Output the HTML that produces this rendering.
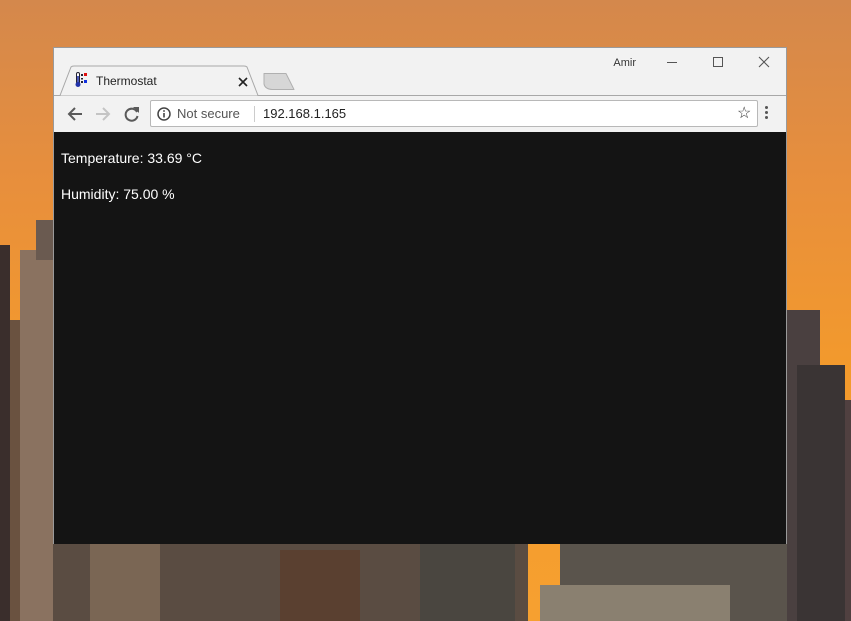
<!DOCTYPE html>
<html><head><meta charset="utf-8"><style>
*{margin:0;padding:0;box-sizing:border-box}
body{width:851px;height:621px;overflow:hidden;position:relative;font-family:"Liberation Sans",Arial,sans-serif;
background:linear-gradient(180deg,#d4884c 0%,#e88f3c 30%,#f39a2c 60%,#f6a030 100%)}
.b{position:absolute;background:#5a4a42}
.win{position:absolute;left:53px;top:47px;width:734px;height:497px;background:#f2f2f2;border:1px solid #9a9a9a}
.content{position:absolute;left:0;top:84px;width:732px;height:412px;background:#141414;color:#fff;font-size:14px}
.omni{position:absolute;left:96px;top:52px;width:608px;height:27px;background:#fff;border:1px solid #b8b8b8;border-radius:2px}
</style></head><body>
<div class="b" style="left:0;top:245px;width:10px;height:376px;background:#3a2e2c"></div>
<div class="b" style="left:10px;top:320px;width:12px;height:301px;background:#6a5240"></div>
<div class="b" style="left:20px;top:250px;width:33px;height:371px;background:#8a7260"></div>
<div class="b" style="left:36px;top:220px;width:17px;height:40px;background:#6a5a50"></div>
<div class="b" style="left:787px;top:310px;width:33px;height:311px;background:#4a4040"></div>
<div class="b" style="left:797px;top:365px;width:48px;height:256px;background:#3a3434"></div>
<div class="b" style="left:845px;top:400px;width:6px;height:221px;background:#504040"></div>
<div class="b" style="left:53px;top:544px;width:475px;height:77px;background:#5a4c42"></div>
<div class="b" style="left:90px;top:544px;width:70px;height:77px;background:#7a6654"></div>
<div class="b" style="left:280px;top:550px;width:80px;height:71px;background:#5a4030"></div>
<div class="b" style="left:420px;top:544px;width:95px;height:77px;background:#4a4640"></div>
<div class="b" style="left:560px;top:544px;width:227px;height:77px;background:#5a544c"></div>
<div class="b" style="left:540px;top:585px;width:190px;height:36px;background:#8a8070"></div>
<div class="win">
  <div style="position:absolute;right:150px;top:9px;font-size:11px;color:#333;text-shadow:0 0 2px #fff">Amir</div>
  <div style="position:absolute;left:613px;top:14px;width:10px;height:1px;background:#555"></div>
  <div style="position:absolute;left:659px;top:9px;width:10px;height:10px;border:1px solid #555"></div>
  <svg style="position:absolute;left:704px;top:8px" width="12" height="12"><path d="M1 1 L11 11 M11 1 L1 11" stroke="#555" stroke-width="1.1"/></svg>
  <div style="position:absolute;left:0;top:47px;width:732px;height:1px;background:#a8a8a8"></div>
  <svg style="position:absolute;left:0;top:16px" width="260" height="33">
    <path d="M0 31.5 L6 31.5 L17 3 Q18 2 20 2 L190 2 Q192 2 193 3 L204 31.5" fill="#f2f2f2" stroke="#a8a8a8"/>
    <path d="M210 9.5 L232 9.5 L240 25.5 L218 25.5 Q211 25 210 20 Z" fill="#d6d6d6" stroke="#b0b0b0" stroke-linejoin="round"/>
  </svg>
  <svg style="position:absolute;left:21px;top:24px" width="14" height="16">
    <rect x="1.5" y="0.5" width="3" height="11" rx="1.5" fill="#fff" stroke="#223"/>
    <circle cx="3" cy="12.5" r="2.5" fill="#2233aa"/>
    <rect x="2.2" y="4" width="1.6" height="8" fill="#2233aa"/>
    <rect x="6" y="2" width="2" height="2" fill="#223"/><rect x="9" y="1" width="3" height="3" fill="#e01010"/>
    <rect x="6" y="6" width="2" height="1.5" fill="#223"/>
    <rect x="6" y="9" width="2" height="2" fill="#223"/><rect x="9" y="8" width="3" height="3" fill="#1030e0"/>
  </svg>
  <div style="position:absolute;left:42px;top:26px;font-size:12px;color:#222">Thermostat</div>
  <svg style="position:absolute;left:184px;top:29px" width="10" height="10"><path d="M1 1 L9 9 M9 1 L1 9" stroke="#222" stroke-width="1.6"/></svg>
  <svg style="position:absolute;left:12px;top:57px" width="80" height="18">
    <path d="M16 9 H3 M9 3 L3 9 L9 15" fill="none" stroke="#5a5a5a" stroke-width="2"/>
    <path d="M30 9 H43 M37 3 L43 9 L37 15" fill="none" stroke="#c4c4c4" stroke-width="2"/>
    <path d="M71 7 A6 6 0 1 0 71.5 11" fill="none" stroke="#5a5a5a" stroke-width="2"/>
    <path d="M67 2 L73 2 L73 8 Z" fill="#5a5a5a"/>
  </svg>
  <div class="omni">
    <svg style="position:absolute;left:6px;top:6px" width="14" height="14"><circle cx="7" cy="7" r="6" fill="none" stroke="#444" stroke-width="1.5"/><rect x="6.2" y="6" width="1.6" height="4.5" fill="#444"/><rect x="6.2" y="3.2" width="1.6" height="1.6" fill="#444"/></svg>
    <div style="position:absolute;left:26px;top:5px;font-size:13px;color:#555">Not secure</div>
    <div style="position:absolute;left:103px;top:5px;width:1px;height:16px;background:#ccc"></div>
    <div style="position:absolute;left:112px;top:5px;font-size:13px;color:#222">192.168.1.165</div>
    <div style="position:absolute;left:586px;top:2px;font-size:16px;color:#333">☆</div>
  </div>
  <div style="position:absolute;left:711px;top:58px;width:3px;height:3px;background:#555;border-radius:50%;box-shadow:0 5px 0 #555,0 10px 0 #555"></div>
  <div class="content">
    <div style="position:absolute;left:7px;top:18px">Temperature: 33.69 °C</div>
    <div style="position:absolute;left:7px;top:54px">Humidity: 75.00 %</div>
  </div>
</div>
</body></html>
